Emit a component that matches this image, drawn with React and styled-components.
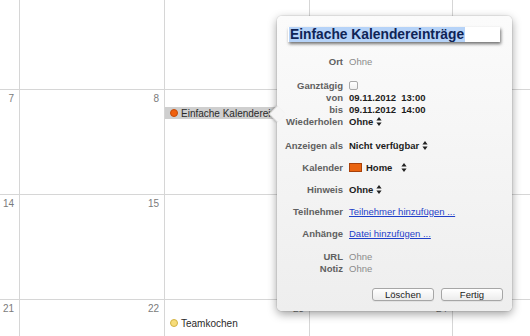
import React from 'react';
import styled, { createGlobalStyle } from 'styled-components';

const GlobalStyle = createGlobalStyle`
  html, body {
    margin: 0;
    padding: 0;
    background: #fff;
    font-family: "Liberation Sans", Arial, sans-serif;
    overflow: hidden;
  }
`;

// days hidden under the popover or past the right edge are left out (null)
const weeks = [
  { days: [null, null, null, null, null], height: '89px' },
  { days: [7, 8, null, null, null], height: '104px' },
  { days: [14, 15, null, null, null], height: '104px' },
  { days: [21, 22, 23, 24, null], height: '1fr' },
];

const events = {
  '1-2': { title: 'Einfache Kalendereinträge', color: '#f0600e', border: '#c44a06', selected: true },
  '3-2': { title: 'Teamkochen', color: '#f7dc7a', border: '#d2b242' },
};

function UpDown() {
  return (
    <svg width="6" height="9" viewBox="0 0 6 9">
      <path d="M3 0 L5.6 3.4 H0.4 Z M3 9 L0.4 5.6 H5.6 Z" fill="#222" />
    </svg>
  );
}

function App() {
  return (
    <>
      <GlobalStyle />
      <Page>
        <Month $rows={weeks.map((w) => w.height).join(' ')}>
          {weeks.map((week, wi) =>
            week.days.map((day, di) => {
              const ev = events[`${wi}-${di}`];
              return (
                <Cell key={`${wi}-${di}`}>
                  <DayNum>{day || '\u00a0'}</DayNum>
                  {ev && (
                    <Event $selected={ev.selected}>
                      <Dot $color={ev.color} $border={ev.border} />
                      <EventTitle>{ev.title}</EventTitle>
                    </Event>
                  )}
                </Cell>
              );
            })
          )}
        </Month>

        <Popover>
          <Arrow />
          <TitleField>
            <Selected>Einfache Kalendereinträge</Selected>
          </TitleField>

          <Fields $top="13px">
            <Label>Ort</Label>
            <Muted>Ohne</Muted>
          </Fields>

          <Fields $top="12px">
            <Label>Ganztägig</Label>
            <Value>
              <Check />
            </Value>
            <Label>von</Label>
            <Strong>09.11.2012&nbsp; 13:00</Strong>
            <Label>bis</Label>
            <Strong>09.11.2012&nbsp; 14:00</Strong>
            <Label>Wiederholen</Label>
            <Strong>
              Ohne <UpDown />
            </Strong>
          </Fields>

          <Fields $top="7px" $row="22px">
            <Label>Anzeigen als</Label>
            <Strong>
              Nicht verfügbar <UpDown />
            </Strong>
            <Label>Kalender</Label>
            <Strong>
              <Swatch />
              Home&nbsp;&nbsp;<UpDown />
            </Strong>
            <Label>Hinweis</Label>
            <Strong>
              Ohne <UpDown />
            </Strong>
            <Label>Teilnehmer</Label>
            <Value>
              <Link>Teilnehmer hinzufügen ...</Link>
            </Value>
            <Label>Anhänge</Label>
            <Value>
              <Link>Datei hinzufügen ...</Link>
            </Value>
          </Fields>

          <Fields $top="6px">
            <Label>URL</Label>
            <Muted>Ohne</Muted>
            <Label>Notiz</Label>
            <Muted>Ohne</Muted>
          </Fields>

          <Buttons>
            <Button>Löschen</Button>
            <Button>Fertig</Button>
          </Buttons>
        </Popover>
      </Page>
    </>
  );
}

export default App;

const Page = styled.div`
  position: relative;
  width: 530px;
  height: 336px;
  overflow: hidden;
`;

const Month = styled.div`
  display: grid;
  grid-template-columns: 19px 144px 144px 142px 144px;
  grid-template-rows: ${(p) => p.$rows};
  gap: 1px;
  width: 597px;
  height: 100%;
  background: #d6d6d6;
`;

const Cell = styled.div`
  background: #fff;
  display: flex;
  flex-direction: column;
  overflow: hidden;
  min-width: 0;
`;

const DayNum = styled.div`
  text-align: right;
  padding: 3px 5px 0 0;
  font-size: 10px;
  line-height: 12px;
  color: #7b7b7b;
`;

const Event = styled.div`
  display: flex;
  align-items: center;
  gap: 3px;
  margin-top: 2px;
  height: 12px;
  padding-left: 5px;
  white-space: nowrap;
  background: ${(p) => (p.$selected ? '#cfcfcf' : 'transparent')};
`;

const Dot = styled.span`
  flex: none;
  width: 6px;
  height: 6px;
  border-radius: 50%;
  background: ${(p) => p.$color};
  border: 1px solid ${(p) => p.$border};
`;

const EventTitle = styled.span`
  font-size: 10px;
  color: #2a2a2a;
`;

const Popover = styled.div`
  position: absolute;
  left: 277px;
  top: 16px;
  width: 235px;
  height: 295px;
  box-sizing: border-box;
  padding: 11px 9px 0 0;
  border-radius: 5px;
  background: linear-gradient(#fbfbfb, #eeeeee);
  box-shadow: 0 3px 10px rgba(0, 0, 0, 0.38), 0 0 0 1px rgba(0, 0, 0, 0.06);
  z-index: 2;
`;

const Arrow = styled.div`
  position: absolute;
  left: -6px;
  top: 92px;
  width: 11px;
  height: 11px;
  background: #f6f6f6;
  border-left: 1px solid rgba(0, 0, 0, 0.12);
  border-bottom: 1px solid rgba(0, 0, 0, 0.12);
  box-shadow: -1px 1px 2px rgba(0, 0, 0, 0.18);
  transform: rotate(45deg);
`;

const TitleField = styled.div`
  margin-left: 11px;
  width: 212px;
  height: 15px;
  background: #fff;
  box-shadow: 1px 2px 3px rgba(0, 0, 0, 0.55);
  display: flex;
  align-items: center;
  padding-left: 1px;
  box-sizing: border-box;
`;

const Selected = styled.span`
  background: #b6d3f8;
  color: #0f2456;
  font-size: 13.8px;
  font-weight: bold;
  line-height: 15px;
  padding: 0 1px;
  white-space: nowrap;
`;

const Fields = styled.div`
  display: grid;
  grid-template-columns: 66px 1fr;
  column-gap: 6px;
  grid-auto-rows: ${(p) => p.$row || '12px'};
  align-items: center;
  margin-top: ${(p) => p.$top};
  font-size: 9.5px;
`;

const Label = styled.div`
  text-align: right;
  font-weight: bold;
  color: #606060;
  white-space: nowrap;
`;

const Value = styled.div`
  display: flex;
  align-items: center;
  white-space: nowrap;
`;

const Muted = styled(Value)`
  color: #8c8c8c;
`;

const Strong = styled(Value)`
  font-weight: bold;
  color: #1c1c1c;

  & svg {
    margin-left: 3px;
  }
`;

const Check = styled.span`
  display: inline-block;
  width: 7px;
  height: 7px;
  border: 1px solid #a9a9a9;
  border-radius: 2px;
  background: linear-gradient(#fff, #f0f0f0);
`;

const Swatch = styled.span`
  display: inline-block;
  width: 11px;
  height: 7px;
  margin-right: 4px;
  background: #ea6410;
  border: 1px solid #a8410a;
`;

const Link = styled.span`
  color: #1f3fc9;
  text-decoration: underline;
  font-weight: 500;
`;

const Buttons = styled.div`
  display: flex;
  justify-content: flex-end;
  gap: 7px;
  margin-top: 14px;
`;

const Button = styled.button`
  width: 62px;
  height: 13px;
  padding: 0;
  border: 1px solid #a6a6a6;
  border-radius: 3px;
  background: linear-gradient(#ffffff, #ececec);
  font-family: "Liberation Sans", Arial, sans-serif;
  font-size: 9.5px;
  line-height: 11px;
  color: #1a1a1a;
  box-shadow: 0 1px 0 rgba(0, 0, 0, 0.05);
`;
